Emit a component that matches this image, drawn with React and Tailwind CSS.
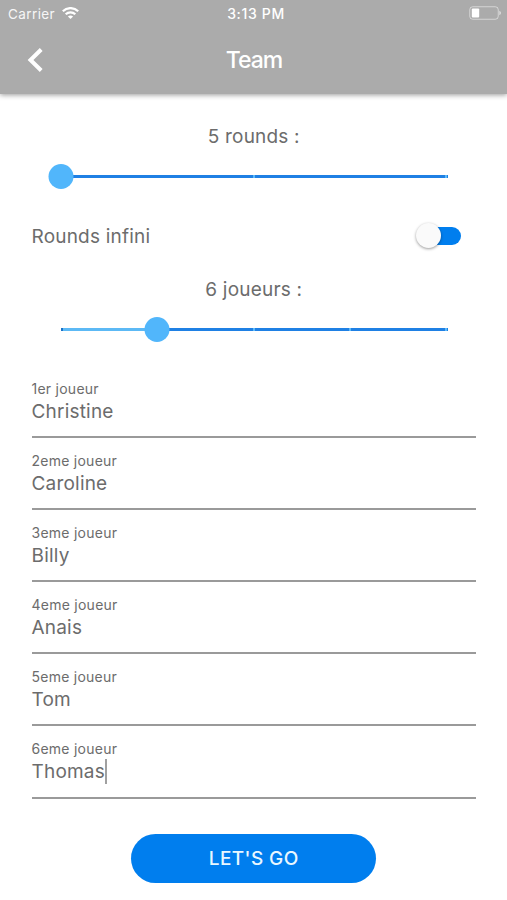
const players = [
  { label: '1er joueur', name: 'Christine' },
  { label: '2eme joueur', name: 'Caroline' },
  { label: '3eme joueur', name: 'Billy' },
  { label: '4eme joueur', name: 'Anais' },
  { label: '5eme joueur', name: 'Tom' },
  { label: '6eme joueur', name: 'Thomas', focused: true },
];

function StatusBar() {
  return (
    <div className="grid h-7 grid-cols-3 items-center pl-2 pr-[5px] text-[13.5px] leading-7 text-white">
      <div className="flex items-center gap-[7px]">
        <span className="tracking-[0.4px] opacity-90">Carrier</span>
        <svg className="-mt-[2px] h-3 w-[17px]" viewBox="0 0 17 12" fill="none" stroke="#fff" strokeWidth="2.2">
          <path d="M0.8 4.3C5.2 0 11.8 0 16.2 4.3" />
          <path d="M3.7 7.3c2.7-2.6 6.9-2.6 9.6 0" />
          <path d="M8.5 12 5.9 9.6c1.5-1.4 3.7-1.4 5.2 0z" fill="#fff" stroke="none" />
        </svg>
      </div>
      <span className="pl-[2px] text-center text-[14px] font-medium tracking-[0.65px]">3:13 PM</span>
      <svg className="-mt-[2px] h-[14px] w-[33px] justify-self-end" viewBox="0 0 33 14" fill="none">
        <rect x="0.75" y="0.75" width="28.5" height="12.5" rx="3" stroke="#fff" strokeOpacity="0.5" />
        <rect x="2.8" y="2.5" width="7.4" height="9" rx="1" fill="#fff" />
        <path d="M30.3 4.8c2.2.8 2.2 3.6 0 4.4z" fill="#fff" fillOpacity="0.6" />
      </svg>
    </div>
  );
}

function Slider({ fill, ticks }) {
  return (
    <div className="relative ml-[29px] mr-7 flex h-[25px] items-center">
      <div className="flex h-[3px] w-full bg-[#1f80e4]">
        <div className="h-full bg-[#5cb9f5]" style={{ width: `${fill}%` }} />
      </div>
      {ticks.map((t) => (
        <div key={t.at} className={`absolute h-[3px] w-[2px] -translate-x-1/2 ${t.dark ? 'bg-[#1a72c8]' : 'bg-[#5bb9fa]'}`} style={{ left: `${t.at}%` }} />
      ))}
      <div className="absolute h-[25px] w-[25px] -translate-x-1/2 rounded-full bg-[#51b6fb]" style={{ left: `${fill}%` }} />
    </div>
  );
}

function Field({ label, name, focused }) {
  return (
    <div className="h-[72.1px] border-b-2 border-[#9a9a9a] pt-[14px] text-[#6c6c6c]">
      <div className="text-[14px] leading-[18px] tracking-[0.25px]">{label}</div>
      <div className="flex items-center pt-px text-[19px] leading-[26px] tracking-[0.2px]">
        <span>{name}</span>
        {focused && <span className="-mt-[2px] h-[25px] w-[2px] bg-[#a0a0a0]" />}
      </div>
    </div>
  );
}

export default function App() {
  return (
    <div className="h-[900px] w-full overflow-hidden bg-white font-[Inter,'Liberation_Sans',sans-serif] text-[#6c6c6c]">
      <header className="h-[94px] bg-[#ababab] shadow-[0_1px_5px_rgba(0,0,0,0.4)]">
        <StatusBar />
        <div className="grid h-[64px] grid-cols-3 items-center pl-[28px] pr-[27px] text-white">
          <svg className="-ml-px h-6 w-4" viewBox="0 0 16 24" fill="none" stroke="#fff" strokeWidth="4">
            <path d="M14.2 1.5 3.5 12l10.7 10.5" />
          </svg>
          <h1 className="text-center text-[23px] font-medium tracking-[-1px]">Team</h1>
        </div>
      </header>
      <main className="flex flex-col pl-[31.5px] pr-[31px]">
        <p className="mt-[30px] text-center text-[19px] leading-[26px] tracking-[0.2px]">5 rounds :</p>
        <div className="mt-[14px]">
          <Slider fill={0} ticks={[{ at: 50 }, { at: 99.6 }]} />
        </div>
        <div className="mt-[35px] flex h-[26px] items-center justify-between pr-[15px]">
          <span className="text-[19px] leading-[26px] tracking-[0.2px]">Rounds infini</span>
          <div className="-mt-[3px] flex h-[18px] w-[43px] items-center rounded-full bg-[#007eee]">
            <span className="-ml-[2px] h-[25px] w-[25px] shrink-0 rounded-full bg-[#fafafa] shadow-[0_1px_3px_rgba(0,0,0,0.4)]" />
          </div>
        </div>
        <p className="mt-[27px] text-center text-[19px] leading-[26px] tracking-[0.2px]">6 joueurs :</p>
        <div className="mt-[14px]">
          <Slider fill={25} ticks={[{ at: 0.3, dark: true }, { at: 50 }, { at: 74.8 }, { at: 99.6 }]} />
        </div>
        <div className="mt-[24px]">
          {players.map((p) => (
            <Field key={p.label} {...p} />
          ))}
        </div>
        <button className="mt-[35.4px] h-[49px] w-[245px] self-center rounded-full bg-[#007eee] pt-px text-[19px] font-medium tracking-[0.4px] text-[#e8f7ff]">
          LET'S GO
        </button>
      </main>
    </div>
  );
}
